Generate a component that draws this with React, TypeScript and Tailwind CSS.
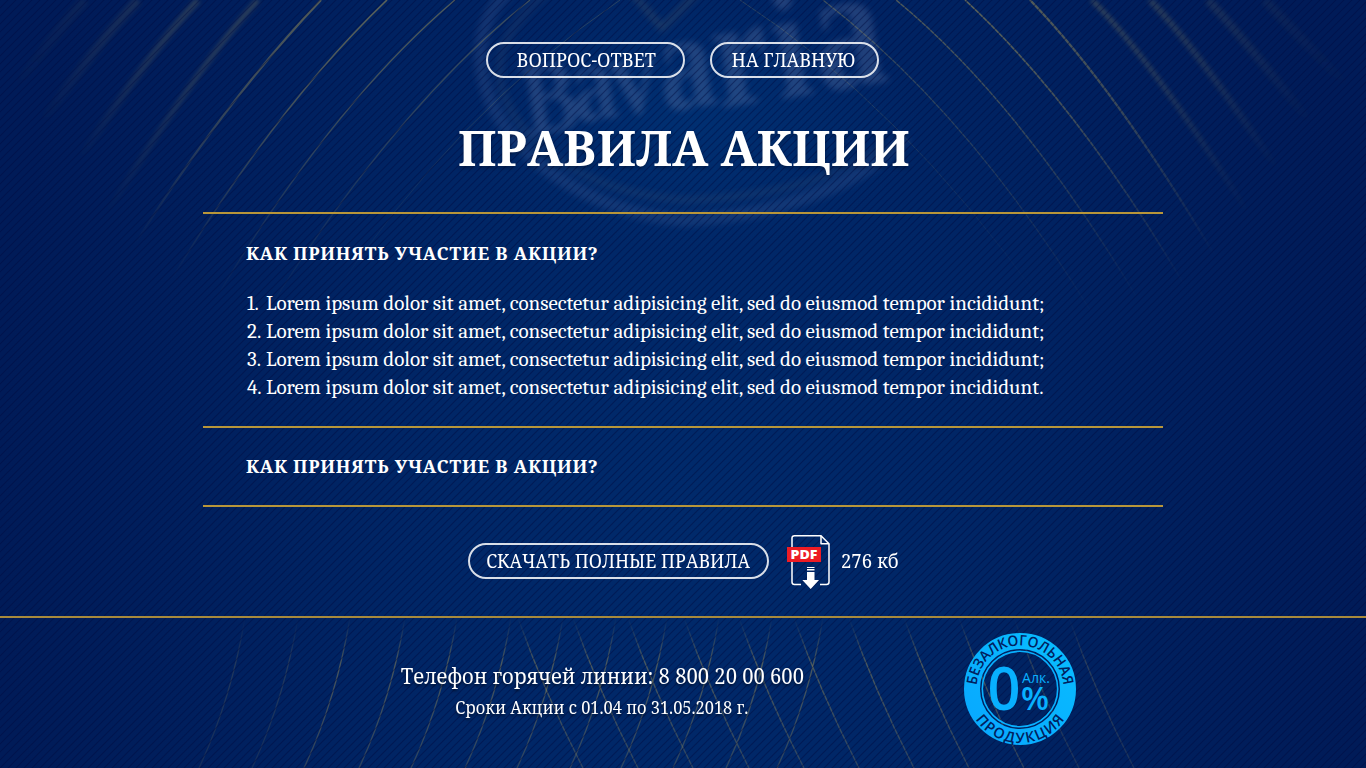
import type { ReactNode } from "react";

const SERIF = "font-['Noto_Serif','DejaVu_Serif_Condensed',serif]";

type Arc = { d: string; w: number; o: number; end: number; blur?: boolean };

const arcs: Arc[] = [
  { d: "M85 0Q50 38 0 110", w: 9, o: 0.07, end: 90, blur: true },
  { d: "M138 0Q92 48 20 155", w: 8, o: 0.15, end: 125, blur: true },
  { d: "M198 0Q142 60 50 205", w: 6, o: 0.26, end: 160, blur: true },
  { d: "M258 0Q200 62 95 232", w: 4, o: 0.36, end: 215, blur: true },
  { d: "M321 0Q222 104 130 252", w: 2.2, o: 0.5, end: 245 },
  { d: "M387 0Q276 106 168 285", w: 1.6, o: 0.56, end: 280 },
  { d: "M455 0Q332 104 215 300", w: 1.4, o: 0.48, end: 300 },
  { d: "M530 0Q396 106 265 315", w: 1.2, o: 0.36, end: 320 },
  { d: "M620 0Q456 112 330 300", w: 1, o: 0.24, end: 300 },
  { d: "M1265 0Q1300 38 1366 106", w: 9, o: 0.07, end: 90, blur: true },
  { d: "M1208 0Q1258 54 1350 175", w: 8, o: 0.14, end: 125, blur: true },
  { d: "M1150 0Q1204 56 1305 212", w: 6, o: 0.25, end: 170, blur: true },
  { d: "M1092 0Q1158 66 1262 236", w: 4, o: 0.35, end: 215, blur: true },
  { d: "M1030 0Q1119 92 1222 268", w: 2.2, o: 0.5, end: 255 },
  { d: "M965 0Q1078 104 1186 288", w: 1.6, o: 0.56, end: 285 },
  { d: "M896 0Q1018 100 1136 296", w: 1.4, o: 0.48, end: 300 },
  { d: "M823 0Q968 112 1090 310", w: 1.2, o: 0.36, end: 320 },
  { d: "M740 0Q900 104 1040 300", w: 1, o: 0.24, end: 300 },
];

const footerRising = [243, 296, 348, 403, 455, 509, 561, 614, 665, 717, 770, 821];
const footerFalling = [521, 576, 631, 687, 742, 797, 852, 907, 962, 1017, 1072];

const logoLetters = [
  { c: "B", x: 528, y: 136, s: 104 },
  { c: "a", x: 576, y: 123, s: 112 },
  { c: "v", x: 616, y: 117, s: 116 },
  { c: "a", x: 664, y: 112, s: 140 },
  { c: "r", x: 720, y: 108, s: 158 },
  { c: "i", x: 780, y: 99, s: 160 },
  { c: "a", x: 820, y: 92, s: 178 },
];

function Backdrop() {
  return (
    <svg className="absolute inset-0 h-full w-full" viewBox="0 0 1366 768" aria-hidden="true">
      <defs>
        <radialGradient id="glow" gradientUnits="userSpaceOnUse" cx="683" cy="500" r="683" gradientTransform="translate(0 -300) scale(1 1.6)">
          <stop offset="0" stopColor="#002a6b" />
          <stop offset="0.4" stopColor="#002666" />
          <stop offset="0.75" stopColor="#001f5d" />
          <stop offset="1" stopColor="#001b58" />
        </radialGradient>
        <radialGradient id="logoGlow">
          <stop offset="0" stopColor="#00387c" stopOpacity="0.5" />
          <stop offset="1" stopColor="#00387c" stopOpacity="0" />
        </radialGradient>
        {arcs.map((a, i) => (
          <linearGradient key={i} id={`arc${i}`} gradientUnits="userSpaceOnUse" x1="0" y1="0" x2="0" y2={a.end}>
            <stop offset="0" stopColor="#a39552" />
            <stop offset="0.4" stopColor="#a39552" stopOpacity="0.7" />
            <stop offset="1" stopColor="#a39552" stopOpacity="0" />
          </linearGradient>
        ))}
        <linearGradient id="fadeEnds" x1="0" y1="0" x2="0" y2="1">
          <stop offset="0" stopColor="#000" />
          <stop offset="0.3" stopColor="#fff" />
          <stop offset="1" stopColor="#999" />
        </linearGradient>
        <mask id="footMask" maskUnits="userSpaceOnUse" x="0" y="618" width="1366" height="150">
          <rect y="618" width="1366" height="150" fill="url(#fadeEnds)" />
        </mask>
        <pattern id="stripes" width="8" height="8" patternUnits="userSpaceOnUse">
          <path d="M-2 2L2 -2M-2 10L10 -2M6 10L10 6" stroke="#00093f" strokeWidth="1.2" strokeOpacity="0.45" />
        </pattern>
        <filter id="soft" x="-30%" y="-30%" width="160%" height="160%">
          <feGaussianBlur stdDeviation="2" />
        </filter>
        <filter id="logoSoft" filterUnits="userSpaceOnUse" x="420" y="-60" width="540" height="320">
          <feGaussianBlur stdDeviation="3.2" />
        </filter>
      </defs>
      <rect width="1366" height="768" fill="url(#glow)" />
      <ellipse cx="690" cy="120" rx="230" ry="130" fill="url(#logoGlow)" />
      <g filter="url(#logoSoft)" fill="none">
        <path
          d="M510 -10C482 14 474 50 486 88C504 150 582 212 684 220C790 216 872 176 906 136"
          stroke="#6b7fb0"
          strokeOpacity="0.17"
          strokeWidth="13"
        />
        <path
          d="M560 -20C508 22 490 56 504 96C528 156 600 194 684 200C776 198 838 176 880 148"
          stroke="#707884"
          strokeOpacity="0.12"
          strokeWidth="8"
        />
        <path d="M630 -10L662 28L700 -10" stroke="#8a8264" strokeOpacity="0.2" strokeWidth="6" />
        <g fill="#8491bd" fillOpacity="0.24" className="font-['Liberation_Serif',serif]" fontWeight="700">
          {logoLetters.map((l) => (
            <text key={l.x} fontSize={l.s} transform={`translate(${l.x} ${l.y}) rotate(-9) scale(0.8 1)`}>
              {l.c}
            </text>
          ))}
        </g>
      </g>
      <g fill="none">
        {arcs.map((a, i) => (
          <path key={a.d} d={a.d} stroke={`url(#arc${i})`} strokeWidth={a.w} strokeOpacity={a.o} filter={a.blur ? "url(#soft)" : undefined} />
        ))}
      </g>
      <g mask="url(#footMask)" fill="none" stroke="#a39552" strokeWidth="1.4" strokeOpacity="0.44">
        {footerRising.map((x) => (
          <path key={x} strokeOpacity={x < 300 ? 0.2 : 0.44} d={`M${x + 2} 618Q${x - 12} 700 ${x - 44} 768`} />
        ))}
        {footerFalling.map((x) => (
          <path key={x} strokeOpacity={x > 1000 ? 0.25 : 0.44} d={`M${x - 3} 618Q${x + 24} 694 ${x + 62} 768`} />
        ))}
      </g>
      <rect width="1366" height="768" fill="url(#stripes)" />
    </svg>
  );
}

function Pill({ width, children }: { width: string; children: ReactNode }) {
  return (
    <a
      className={`${width} flex h-9 items-center justify-center rounded-full border-2 border-white/85 text-[19px] leading-none whitespace-nowrap`}
    >
      {children}
    </a>
  );
}

function PdfIcon() {
  return (
    <svg className="h-[56px] w-[44px]" viewBox="0 0 44 56">
      <g fill="none" stroke="#fff" strokeWidth="1.5" strokeLinejoin="round">
        <path d="M15 50.5H8.500Q6 50.500 6 48V4Q6 1.800 8.500 1.800H35L43 9.800V48Q43 50.500 40.500 50.500H34" />
        <path d="M35 1.800V9.800H43" />
      </g>
      <rect x="1" y="13" width="34" height="15" fill="#ed1c24" />
      <text
        x="4.500"
        y="25.200"
        fontSize="13"
        fontWeight="800"
        fill="#fff"
        textLength="27"
        lengthAdjust="spacingAndGlyphs"
        className="font-['Open_Sans',sans-serif]"
      >
        PDF
      </text>
      <path d="M21 33H28.500V34H21ZM21 35H28.500V36.500H21ZM21 38H28.500V46H33L24.700 55L16.300 46H21Z" fill="#fff" />
    </svg>
  );
}

function Badge() {
  return (
    <svg className="h-28 w-28" viewBox="0 0 112 112">
      <defs>
        <linearGradient id="ring" x1="0" y1="1" x2="1" y2="0">
          <stop offset="0" stopColor="#08a8ff" />
          <stop offset="1" stopColor="#08bcff" />
        </linearGradient>
        <path id="upper" d="M12.500 56A43.500 43.500 0 0 1 99.500 56" />
        <path id="lower" d="M2 56A54 54 0 0 0 110 56" />
      </defs>
      <circle cx="56" cy="56" r="48" fill="none" stroke="url(#ring)" strokeWidth="16" />
      <circle cx="56" cy="56" r="37.700" fill="none" stroke="#08b0ff" strokeWidth="1.600" />
      <g className="font-['Open_Sans','Noto_Sans',sans-serif]">
        <g fill="#00215f" fontSize="14.500" fontWeight="600" textAnchor="middle">
          <text textLength="129" lengthAdjust="spacingAndGlyphs">
            <textPath href="#upper" startOffset="50%">БЕЗАЛКОГОЛЬНАЯ</textPath>
          </text>
          <text textLength="105" lengthAdjust="spacing">
            <textPath href="#lower" startOffset="50%">ПРОДУКЦИЯ</textPath>
          </text>
        </g>
        <g fill="#08b0ff">
          <text x="23.500" y="77.300" fontSize="60" fontWeight="600" textLength="33" lengthAdjust="spacingAndGlyphs">0</text>
          <text x="58" y="49.500" fontSize="15" textLength="28" lengthAdjust="spacingAndGlyphs">Алк.</text>
          <text x="57" y="77.300" fontSize="32" fontWeight="600" textLength="28" lengthAdjust="spacingAndGlyphs">%</text>
        </g>
      </g>
    </svg>
  );
}

const rules = ["incididunt;", "incididunt;", "incididunt;", "incididunt."];

export default function App() {
  return (
    <div className={`relative h-[768px] w-full overflow-hidden bg-[#001f5b] text-white ${SERIF}`}>
      <Backdrop />
      <div className="relative flex h-full flex-col">
        <nav className="flex justify-center gap-[25px] pt-[42px] pr-[1px]">
          <Pill width="w-[199px]">
            <span className="scale-x-[.95] pl-0.5">ВОПРОС-ОТВЕТ</span>
          </Pill>
          <Pill width="w-[169px]">
            <span className="scale-x-[.947] pr-[3px]">НА ГЛАВНУЮ</span>
          </Pill>
        </nav>
        <h1 className="mt-[44px] flex h-[50px] items-center justify-center text-[50px] leading-none font-bold whitespace-nowrap text-shadow-[0_2px_4px_rgb(0_0_0/0.3)]">
          <span className="scale-x-[.962] pl-px">ПРАВИЛА АКЦИИ</span>
        </h1>
        <main className="mx-auto mt-[40px] w-[960px]">
          <section className="h-[214px] border-t-2 border-[#b8963a] pl-[43px]">
            <h2 className="pt-[25px] text-[18px] leading-[28px] font-bold tracking-[.66px]">КАК ПРИНЯТЬ УЧАСТИЕ В АКЦИИ?</h2>
            <ol className="mt-[22px] font-['Caladea','Cambria','Liberation_Serif',serif] text-[21px] leading-[28px] tracking-[-.03px]">
              {rules.map((end, i) => (
                <li key={i} className="flex whitespace-nowrap">
                  <span className="w-[20px] pl-px">{i + 1}.</span>
                  <span>Lorem ipsum dolor sit amet, consectetur adipisicing elit, sed do eiusmod tempor {end}</span>
                </li>
              ))}
            </ol>
          </section>
          <section className="h-[81px] border-y-2 border-[#b8963a] pl-[43px]">
            <h2 className="pt-[24px] text-[18px] leading-[28px] font-bold tracking-[.66px]">КАК ПРИНЯТЬ УЧАСТИЕ В АКЦИИ?</h2>
          </section>
        </main>
        <div className="flex h-[109px] items-center pl-[468px]">
          <div className="-mt-[2px]">
            <Pill width="w-[301px]">
              <span className="scale-x-[.935] pt-px">СКАЧАТЬ ПОЛНЫЕ ПРАВИЛА</span>
            </Pill>
          </div>
          <div className="ml-[17px]">
            <PdfIcon />
          </div>
          <span className="ml-[11px] origin-left scale-x-[.975] text-[19px] leading-none">276 кб</span>
        </div>
        <footer className="flex flex-1 border-t-2 border-[#a88a3c]">
          <div className="ml-[352px] flex w-[500px] flex-col items-center pt-[42px] whitespace-nowrap text-shadow-[0_2px_3px_rgb(0_0_0/0.5)]">
            <p className="scale-x-[.919] text-[22px] leading-[30px]">Телефон горячей линии: 8 800 20 00 600</p>
            <p className="mt-[4px] scale-x-[.911] text-[18px] leading-[26px]">Сроки Акции с 01.04 по 31.05.2018 г.</p>
          </div>
          <div className="ml-[112px] pt-[15px]">
            <Badge />
          </div>
        </footer>
      </div>
    </div>
  );
}
